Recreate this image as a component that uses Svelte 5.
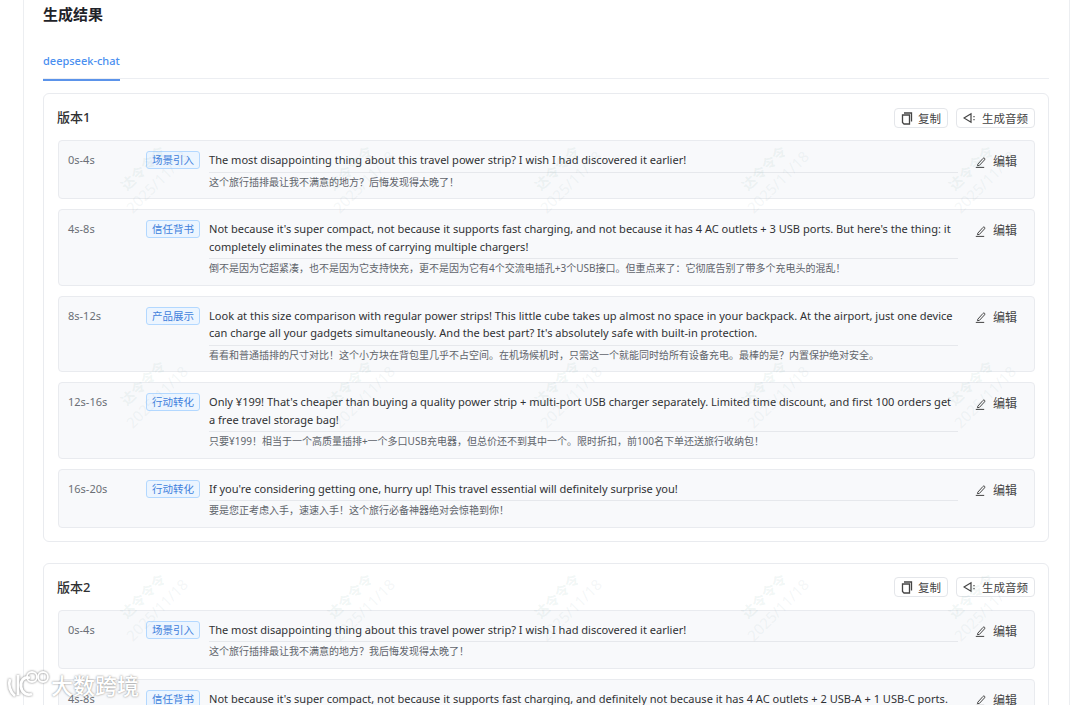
<script>
	const v1 = [
		{
			time: '0s-4s',
			tag: '场景引入',
			en: 'The most disappointing thing about this travel power strip? I wish I had discovered it earlier!',
			zh: '这个旅行插排最让我不满意的地方？后悔发现得太晚了！'
		},
		{
			time: '4s-8s',
			tag: '信任背书',
			en: "Not because it's super compact, not because it supports fast charging, and not because it has 4 AC outlets + 3 USB ports. But here's the thing: it completely eliminates the mess of carrying multiple chargers!",
			zh: '倒不是因为它超紧凑，也不是因为它支持快充，更不是因为它有4个交流电插孔+3个USB接口。但重点来了：它彻底告别了带多个充电头的混乱！'
		},
		{
			time: '8s-12s',
			tag: '产品展示',
			en: "Look at this size comparison with regular power strips! This little cube takes up almost no space in your backpack. At the airport, just one device can charge all your gadgets simultaneously. And the best part? It's absolutely safe with built-in protection.",
			zh: '看看和普通插排的尺寸对比！这个小方块在背包里几乎不占空间。在机场候机时，只需这一个就能同时给所有设备充电。最棒的是？内置保护绝对安全。'
		},
		{
			time: '12s-16s',
			tag: '行动转化',
			en: "Only ¥199! That's cheaper than buying a quality power strip + multi-port USB charger separately. Limited time discount, and first 100 orders get a free travel storage bag!",
			zh: '只要¥199！相当于一个高质量插排+一个多口USB充电器，但总价还不到其中一个。限时折扣，前100名下单还送旅行收纳包！'
		},
		{
			time: '16s-20s',
			tag: '行动转化',
			en: "If you're considering getting one, hurry up! This travel essential will definitely surprise you!",
			zh: '要是您正考虑入手，速速入手！这个旅行必备神器绝对会惊艳到你！'
		}
	];
	const v2 = [
		{
			time: '0s-4s',
			tag: '场景引入',
			en: 'The most disappointing thing about this travel power strip? I wish I had discovered it earlier!',
			zh: '这个旅行插排最让我不满意的地方？我后悔发现得太晚了！'
		},
		{
			time: '4s-8s',
			tag: '信任背书',
			en: "Not because it's super compact, not because it supports fast charging, and definitely not because it has 4 AC outlets + 2 USB-A + 1 USB-C ports.",
			zh: ''
		}
	];
	const versions = [
		{ title: '版本1', rows: v1 },
		{ title: '版本2', rows: v2 }
	];
	const marks = [];
	for (const y of [175, 390, 603]) {
		for (let i = 0; i < 5; i++) {
			marks.push({ x: 150 + i * 207, y });
		}
	}
</script>

<div class="page">
	<div class="panel">
		<h2>生成结果</h2>
		<div class="tabs"><span class="tab">deepseek-chat</span></div>

		{#each versions as version}
			<section class="version">
				<header>
					<h3>{version.title}</h3>
					<div class="actions">
						<button>
							<svg width="12" height="14" viewBox="0 0 12 14" fill="none" stroke="#444" stroke-width="1.3">
								<path d="M1.5 4h7v9H3l-1.5-1.5z" />
								<path d="M3 2h7.5v8.5" />
							</svg>
							复制
						</button>
						<button>
							<svg width="14" height="12" viewBox="0 0 14 12" fill="none" stroke="#444" stroke-width="1.2">
								<path d="M1 6 8 1.8v8.4z" />
								<path d="M11 4v1.2M11 7v1.2" />
							</svg>
							生成音频
						</button>
					</div>
				</header>

				<div class="rows">
					{#each version.rows as row}
						<div class="row">
							<span class="time">{row.time}</span>
							<span class="tag">{row.tag}</span>
							<div class="body">
								<p class="en">{row.en}</p>
								<p class="zh">{row.zh}</p>
							</div>
							<span class="edit">
								<svg width="12" height="12" viewBox="0 0 12 12" fill="none" stroke="#444" stroke-width="1">
									<path d="M2.8 8.2 8 2.4c.6-.6 1.2-.5 1.6-.1s.4 1 0 1.5L4.4 9.4l-2 .3z" />
									<path d="M.8 11.4h8.4" />
								</svg>
								编辑
							</span>
						</div>
					{/each}
				</div>
			</section>
		{/each}
	</div>

	<div class="marks" aria-hidden="true">
		{#each marks as m}
			<div class="mark" style="left: {m.x}px; top: {m.y}px">
				<span class="who">达令令令</span>
				<span class="date">2025/11/18</span>
			</div>
		{/each}
	</div>

	<div class="brand">
		<svg width="44" height="32" viewBox="0 0 44 32" fill="none" stroke="#fff" stroke-width="2.8">
			<path d="M3 11C1 17 3 24 8 28" />
			<path d="M11 7v20" />
			<path d="M23 10c-6-2-10 3-9 9 1 6 6 9 11 7" />
			<circle cx="25" cy="9" r="5" stroke-width="1.8" />
			<circle cx="36" cy="9" r="5" stroke-width="1.8" />
		</svg>
		<span>大数跨境</span>
	</div>
</div>

<style>
	:global(body) {
		background: #fff;
	}

	.page {
		position: relative;
		height: 705px;
		overflow: hidden;
		font-family: 'Noto Sans', 'Noto Sans CJK SC', sans-serif;
		color: #303133;
	}

	.panel {
		margin: 0 10px 0 23px;
		height: 100%;
		box-sizing: border-box;
		padding: 4px 20px 0 19px;
		border-left: 1px solid #eceef1;
		border-right: 1px solid #eceef1;
	}

	h2 {
		margin: 0;
		font-size: 15px;
		line-height: 20px;
		font-weight: 700;
		color: #1f2329;
	}

	.tabs {
		margin-top: 24px;
		height: 31px;
		border-bottom: 1px solid #eceef2;
		box-sizing: border-box;
	}

	.tab {
		display: inline-block;
		height: 31px;
		box-sizing: border-box;
		padding-top: 3px;
		font-size: 11px;
		font-weight: 500;
		line-height: 16px;
		color: #4a8ff0;
		border-bottom: 2px solid #5b93ea;
	}

	.version {
		margin-top: 14px;
		margin-bottom: 21px;
		padding: 13px 13px 13px 14px;
		border: 1px solid #e9ebef;
		border-radius: 6px;
	}

	header {
		display: flex;
		justify-content: space-between;
		align-items: center;
		height: 21px;
		margin-bottom: 12px;
	}

	h3 {
		margin: 0 0 2px -1px;
		font-size: 13px;
		font-weight: 500;
		color: #303133;
	}

	.actions {
		display: flex;
		gap: 8px;
	}

	button {
		display: flex;
		align-items: center;
		gap: 5px;
		height: 20px;
		padding: 0 6px;
		font: inherit;
		font-size: 11.5px;
		color: #444;
		background: #fff;
		border: 1px solid #e4e6ea;
		border-radius: 4px;
	}

	.rows {
		display: flex;
		flex-direction: column;
		gap: 10px;
	}

	.row {
		display: flex;
		align-items: flex-start;
		padding: 10px 0 8.5px 9px;
		background: #f8f9fb;
		border: 1px solid #e9ebef;
		border-radius: 4px;
	}

	.time {
		width: 78px;
		flex: none;
		font-size: 11px;
		line-height: 17px;
		color: #6b6f76;
	}

	.tag {
		flex: none;
		width: 54px;
		height: 18px;
		box-sizing: border-box;
		margin-right: 9px;
		font-size: 10.5px;
		line-height: 16px;
		text-align: center;
		color: #3f7fdc;
		background: #ecf5ff;
		border: 1px solid #b3d8ff;
		border-radius: 3px;
	}

	.body {
		flex: none;
		width: 749px;
	}

	.en {
		margin: 0;
		padding-bottom: 3px;
		font-size: 11.05px;
		line-height: 17.5px;
		color: #303133;
		border-bottom: 1px solid #e6e8ec;
	}

	.zh {
		margin: 0;
		padding-top: 2px;
		font-size: 10px;
		line-height: 15px;
		color: #60646b;
	}

	.edit {
		display: flex;
		align-items: center;
		gap: 6px;
		margin-left: 17px;
		padding-top: 2px;
		font-size: 12px;
		line-height: 17px;
		color: #444;
	}

	.marks {
		position: absolute;
		inset: 0;
		pointer-events: none;
	}

	.mark {
		position: absolute;
		display: flex;
		flex-direction: column;
		align-items: center;
		gap: 3px;
		transform: translate(-50%, -50%) rotate(-45deg);
		line-height: 16px;
		white-space: nowrap;
	}

	.who {
		font-size: 14px;
		font-weight: 700;
		color: rgba(120, 170, 160, 0.11);
	}

	.date {
		font-size: 15px;
		color: rgba(150, 175, 185, 0.11);
	}

	.brand {
		position: absolute;
		left: 7px;
		bottom: 5px;
		display: flex;
		align-items: center;
		font-size: 22px;
		font-weight: 500;
		color: #fff;
		text-shadow: 0 0 2px rgba(110, 110, 110, 0.9);
	}

	.brand svg {
		filter: drop-shadow(0 0 1px rgba(110, 110, 110, 0.9));
	}
</style>
